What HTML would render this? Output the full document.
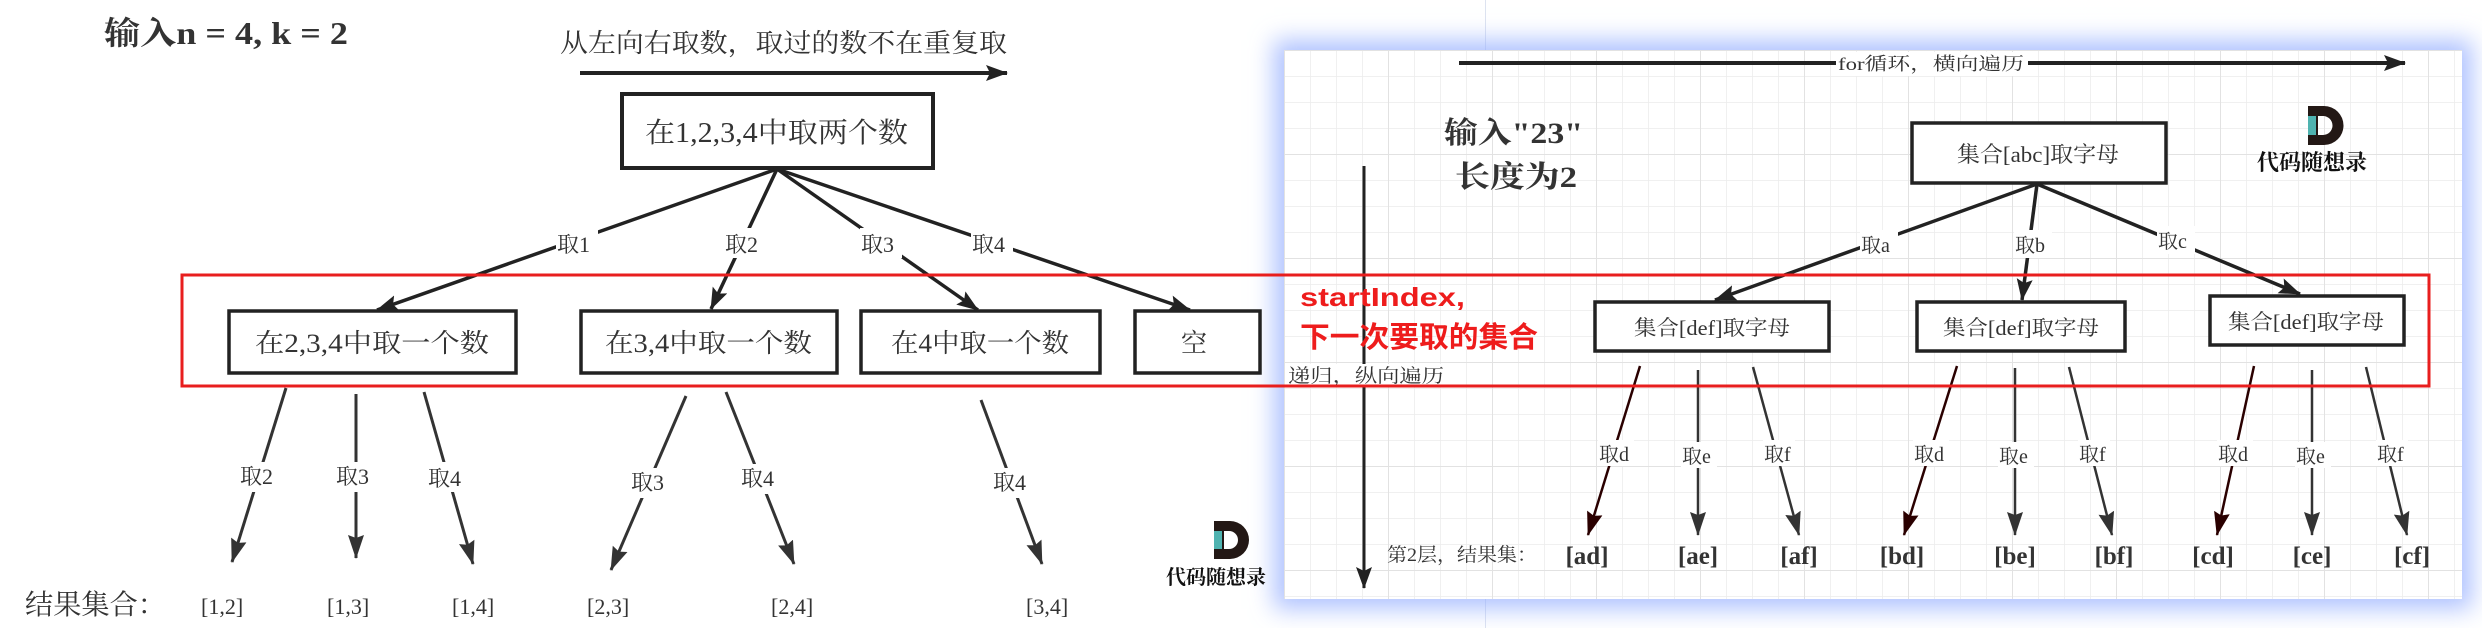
<!DOCTYPE html>
<html><head><meta charset="utf-8">
<style>
html,body{margin:0;padding:0;background:#fff;}
body{width:2482px;height:628px;position:relative;overflow:hidden;}
#panel{position:absolute;left:1284px;top:50px;width:1178px;height:549px;background:#fff;box-shadow:0 0 22px 10px rgba(150,175,255,0.75);}
svg{position:absolute;left:0;top:0;}
.s{font-family:"Liberation Serif","Noto Serif CJK SC",serif;fill:#333;}
.b{font-weight:bold;}
.r{font-family:"Liberation Sans","Noto Sans CJK SC",sans-serif;font-weight:bold;fill:#ee1c1c;}
</style></head><body>
<div style="position:absolute;left:1485px;top:0;width:1px;height:628px;background:#dde3f0"></div>
<div id="panel"></div>
<svg width="2482" height="628" viewBox="0 0 2482 628">
<defs>
<pattern id="g" x="1284" y="50" width="26" height="26" patternUnits="userSpaceOnUse">
<path d="M0 0H26M0 0V26" stroke="#ececec" stroke-width="1.5" fill="none"/>
</pattern>
<pattern id="g2" x="1284" y="50" width="104" height="104" patternUnits="userSpaceOnUse">
<path d="M0 0H104M0 0V104" stroke="#e2e2e2" stroke-width="2" fill="none"/>
</pattern>
<marker id="a" viewBox="0 0 22 16" refX="21" refY="8" markerWidth="22" markerHeight="16" orient="auto" markerUnits="userSpaceOnUse"><path d="M0 0L22 8L0 16L4 8z" fill="#222"/></marker>
<marker id="a2" viewBox="0 0 24 16" refX="23" refY="8" markerWidth="24" markerHeight="16" orient="auto" markerUnits="userSpaceOnUse"><path d="M0 0L24 8L0 16L3 8z" fill="#333"/></marker>
<marker id="ar" viewBox="0 0 24 16" refX="23" refY="8" markerWidth="24" markerHeight="16" orient="auto" markerUnits="userSpaceOnUse"><path d="M0 0L24 8L0 16L3 8z" fill="#2a0000"/></marker>
</defs>
<rect x="1284" y="50" width="1178" height="549" fill="url(#g)"/>
<rect x="1284" y="50" width="1178" height="549" fill="url(#g2)"/>

<!-- LEFT -->
<text class="s b" x="104" y="44" font-size="32" fill="#333" textLength="244" lengthAdjust="spacingAndGlyphs">输入n = 4, k = 2</text>
<text class="s" x="560" y="52" font-size="26" textLength="447" lengthAdjust="spacingAndGlyphs">从左向右取数，取过的数不在重复取</text>
<line x1="580" y1="73" x2="1007" y2="73" stroke="#222" stroke-width="4" marker-end="url(#a)"/>
<rect x="622" y="94" width="311" height="74" fill="#fff" stroke="#222" stroke-width="4"/>
<text class="s" x="645" y="142" font-size="28" textLength="263" lengthAdjust="spacingAndGlyphs">在1,2,3,4中取两个数</text>
<g stroke="#222" stroke-width="3.5" fill="none">
<line x1="777" y1="169" x2="377" y2="310" marker-end="url(#a)"/>
<line x1="777" y1="169" x2="711" y2="309" marker-end="url(#a)"/>
<line x1="777" y1="169" x2="978" y2="310" marker-end="url(#a)"/>
<line x1="777" y1="169" x2="1190" y2="310" marker-end="url(#a)"/>
</g>
<g fill="#fff"><rect x="556" y="228" width="42" height="30"/><rect x="724" y="228" width="42" height="30"/><rect x="860" y="228" width="42" height="30"/><rect x="971" y="228" width="42" height="30"/></g>
<g class="s" font-size="22"><text x="557" y="252">取1</text><text x="725" y="252">取2</text><text x="861" y="252">取3</text><text x="972" y="252">取4</text></g>
<g fill="#fff" stroke="#222" stroke-width="3.5">
<rect x="229" y="311" width="287" height="62"/><rect x="581" y="311" width="256" height="62"/><rect x="861" y="311" width="239" height="62"/><rect x="1135" y="311" width="125" height="62"/>
</g>
<g class="s" font-size="26">
<text x="255" y="352" textLength="234" lengthAdjust="spacingAndGlyphs">在2,3,4中取一个数</text>
<text x="605" y="352" textLength="207" lengthAdjust="spacingAndGlyphs">在3,4中取一个数</text>
<text x="891" y="352" textLength="178" lengthAdjust="spacingAndGlyphs">在4中取一个数</text>
<text x="1181" y="352">空</text>
</g>
<g stroke="#333" stroke-width="3" fill="none">
<line x1="286" y1="388" x2="232" y2="562" marker-end="url(#a2)"/>
<line x1="356" y1="394" x2="356" y2="558" marker-end="url(#a2)"/>
<line x1="424" y1="392" x2="473" y2="564" marker-end="url(#a2)"/>
<line x1="686" y1="396" x2="611" y2="570" marker-end="url(#a2)"/>
<line x1="726" y1="392" x2="794" y2="564" marker-end="url(#a2)"/>
<line x1="981" y1="400" x2="1042" y2="564" marker-end="url(#a2)"/>
</g>
<g fill="#fff"><rect x="238" y="462" width="44" height="30"/><rect x="334" y="462" width="44" height="30"/><rect x="426" y="462" width="44" height="30"/><rect x="629" y="468" width="44" height="30"/><rect x="739" y="464" width="44" height="30"/><rect x="991" y="468" width="44" height="30"/></g>
<g class="s" font-size="22"><text x="240" y="484">取2</text><text x="336" y="484">取3</text><text x="428" y="486">取4</text><text x="631" y="490">取3</text><text x="741" y="486">取4</text><text x="993" y="490">取4</text></g>
<text class="s" x="25" y="614" font-size="28" textLength="141" lengthAdjust="spacingAndGlyphs">结果集合：</text>
<g class="s" font-size="22"><text x="201" y="614">[1,2]</text><text x="327" y="614">[1,3]</text><text x="452" y="614">[1,4]</text><text x="587" y="614">[2,3]</text><text x="771" y="614">[2,4]</text><text x="1026" y="614">[3,4]</text></g>
<!-- left logo -->
<path d="M1214 521H1230A19 19 0 0 1 1230 559H1214Z M1224 531V549H1229A9 9 0 0 0 1229 531Z" fill="#231815" fill-rule="evenodd"/>
<rect x="1214" y="531" width="8" height="18" fill="#4fb3b0"/>
<text x="1166" y="584" font-size="20" font-weight="bold" font-family="'Noto Serif CJK SC',serif" fill="#111">代码随想录</text>

<!-- RIGHT PANEL -->
<line x1="1459" y1="63" x2="2405" y2="63" stroke="#222" stroke-width="4" marker-end="url(#a)"/>
<rect x="1836" y="52" width="192" height="24" fill="#fff"/>
<text class="s" x="1838" y="70" font-size="18" textLength="186" lengthAdjust="spacingAndGlyphs">for循环，横向遍历</text>
<text class="s b" x="1444" y="143" font-size="30" textLength="139" lengthAdjust="spacingAndGlyphs">输入"23"</text>
<text class="s b" x="1455" y="187" font-size="30" textLength="122" lengthAdjust="spacingAndGlyphs">长度为2</text>
<line x1="1364" y1="166" x2="1364" y2="588" stroke="#222" stroke-width="3" marker-end="url(#a)"/>
<rect x="1286" y="364" width="160" height="22" fill="#fff"/>
<text class="s" x="1288" y="382" font-size="19" fill="#444" textLength="156" lengthAdjust="spacingAndGlyphs">递归，纵向遍历</text>
<!-- right logo -->
<path d="M2308 106H2324A19.5 19.5 0 0 1 2324 145H2308Z M2318 116V135H2323A9.5 9.5 0 0 0 2323 116Z" fill="#231815" fill-rule="evenodd"/>
<rect x="2308" y="116" width="8" height="19" fill="#4fb3b0"/>
<text x="2257" y="170" font-size="22" font-weight="bold" font-family="'Noto Serif CJK SC',serif" fill="#111">代码随想录</text>

<rect x="1912" y="123" width="254" height="60" fill="#fff" stroke="#222" stroke-width="3.5"/>
<text class="s" x="1957" y="162" font-size="22" textLength="162" lengthAdjust="spacingAndGlyphs">集合[abc]取字母</text>
<g stroke="#222" stroke-width="3.5" fill="none">
<line x1="2037" y1="184" x2="1715" y2="300" marker-end="url(#a)"/>
<line x1="2037" y1="184" x2="2022" y2="300" marker-end="url(#a)"/>
<line x1="2037" y1="184" x2="2300" y2="294" marker-end="url(#a)"/>
</g>
<g fill="#fff"><rect x="1860" y="230" width="38" height="28"/><rect x="2014" y="230" width="38" height="28"/><rect x="2157" y="226" width="38" height="28"/></g>
<g class="s" font-size="20"><text x="1861" y="252">取a</text><text x="2015" y="252">取b</text><text x="2158" y="248">取c</text></g>
<g fill="#fff" stroke="#222" stroke-width="3.5">
<rect x="1595" y="302" width="234" height="49"/><rect x="1917" y="302" width="208" height="49"/><rect x="2210" y="296" width="194" height="49"/>
</g>
<g class="s" font-size="21">
<text x="1634" y="335" textLength="156" lengthAdjust="spacingAndGlyphs">集合[def]取字母</text>
<text x="1943" y="335" textLength="156" lengthAdjust="spacingAndGlyphs">集合[def]取字母</text>
<text x="2228" y="329" textLength="156" lengthAdjust="spacingAndGlyphs">集合[def]取字母</text>
</g>
<g stroke-width="2.5" fill="none">
<line x1="1640" y1="366" x2="1588" y2="535" stroke="#2a0000" marker-end="url(#ar)"/>
<line x1="1698" y1="370" x2="1698" y2="535" stroke="#333" marker-end="url(#a2)"/>
<line x1="1753" y1="367" x2="1799" y2="535" stroke="#333" marker-end="url(#a2)"/>
<line x1="1957" y1="366" x2="1904" y2="535" stroke="#2a0000" marker-end="url(#ar)"/>
<line x1="2015" y1="368" x2="2015" y2="535" stroke="#333" marker-end="url(#a2)"/>
<line x1="2069" y1="367" x2="2112" y2="535" stroke="#333" marker-end="url(#a2)"/>
<line x1="2254" y1="366" x2="2217" y2="535" stroke="#2a0000" marker-end="url(#ar)"/>
<line x1="2312" y1="370" x2="2312" y2="535" stroke="#333" marker-end="url(#a2)"/>
<line x1="2366" y1="367" x2="2407" y2="535" stroke="#333" marker-end="url(#a2)"/>
</g>
<g fill="#fff"><rect x="1598" y="440" width="36" height="26"/><rect x="1681" y="442" width="36" height="26"/><rect x="1763" y="440" width="32" height="26"/><rect x="1913" y="440" width="36" height="26"/><rect x="1998" y="442" width="36" height="26"/><rect x="2078" y="440" width="32" height="26"/><rect x="2217" y="440" width="36" height="26"/><rect x="2295" y="442" width="36" height="26"/><rect x="2376" y="440" width="32" height="26"/></g>
<g class="s" font-size="20">
<text x="1599" y="461">取d</text><text x="1682" y="463">取e</text><text x="1764" y="461">取f</text>
<text x="1914" y="461">取d</text><text x="1999" y="463">取e</text><text x="2079" y="461">取f</text>
<text x="2218" y="461">取d</text><text x="2296" y="463">取e</text><text x="2377" y="461">取f</text>
</g>
<text class="s" x="1387" y="561" font-size="19" textLength="150" lengthAdjust="spacingAndGlyphs">第2层，结果集：</text>
<g class="s b" font-size="25" text-anchor="middle">
<text x="1587" y="564">[ad]</text><text x="1698" y="564">[ae]</text><text x="1799" y="564">[af]</text>
<text x="1902" y="564">[bd]</text><text x="2015" y="564">[be]</text><text x="2114" y="564">[bf]</text>
<text x="2213" y="564">[cd]</text><text x="2312" y="564">[ce]</text><text x="2412" y="564">[cf]</text>
</g>
<text class="r" x="1300" y="306" font-size="26" textLength="165" lengthAdjust="spacingAndGlyphs">startIndex,</text>
<text class="r" x="1300" y="347" font-size="29" textLength="238" lengthAdjust="spacingAndGlyphs">下一次要取的集合</text>
<rect x="182" y="275" width="2247" height="111" fill="none" stroke="#e81e1e" stroke-width="3"/>
</svg>
</body></html>
